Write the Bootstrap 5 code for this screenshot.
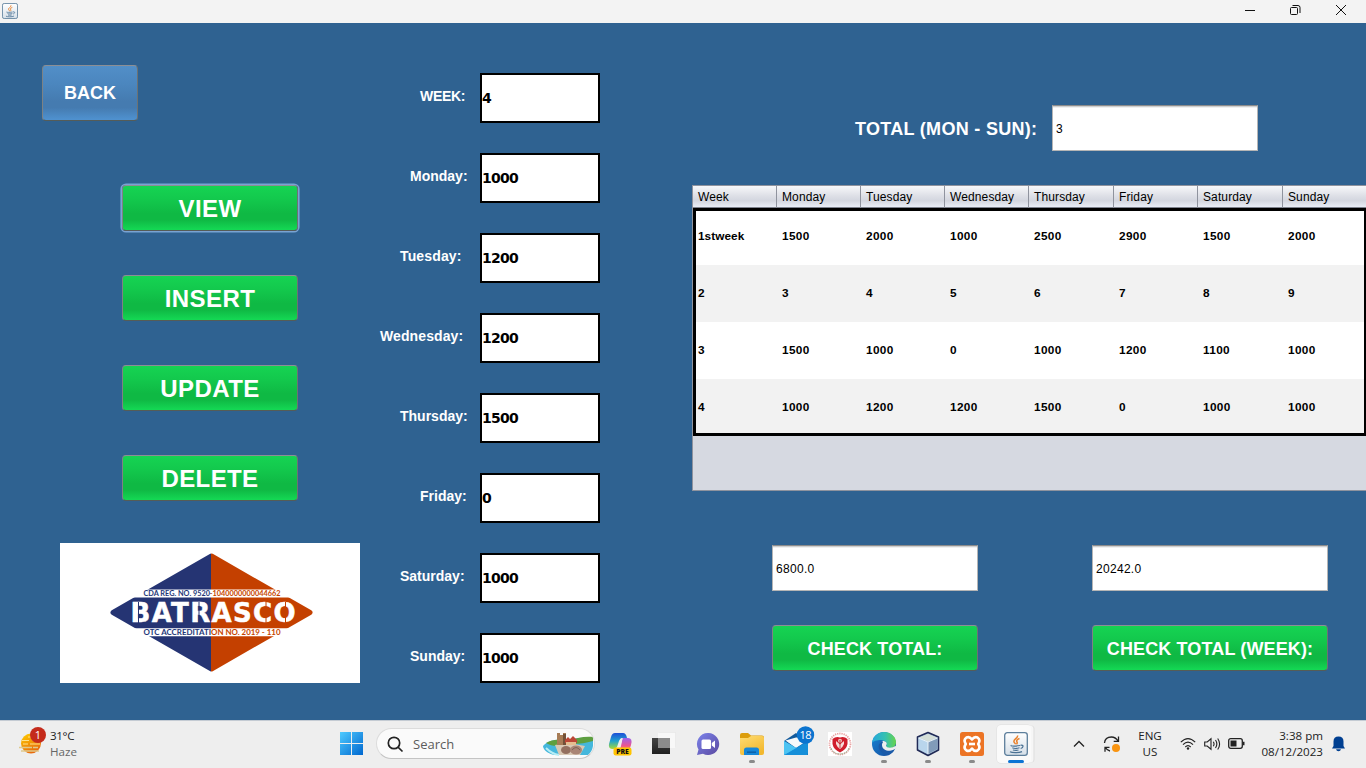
<!DOCTYPE html>
<html lang="en">
<head>
<meta charset="utf-8">
<title>BATRASCO weekly totals</title>
<link href="https://cdn.jsdelivr.net/npm/bootstrap@5.3.0/dist/css/bootstrap.min.css" rel="stylesheet">
<style>
body{width:1366px;height:768px;overflow:hidden;font-family:"Liberation Sans",Arial,sans-serif;background:#2f6291;color:#000}
.titlebar{height:23px;background:#f3f3f3;padding:0 20px 1px 2px}
.desk{height:697px;background:#2f6291}
.side{width:360px;padding-top:42px}
.fields{width:220px;margin-left:20px;padding-top:50px;gap:30px}
.panel{width:674px;margin-left:92px;padding-top:82px}
.btn.sw{border:1px solid;border-color:#8c8f95 #6d7273 #555c58 #7d8284;border-radius:4px;color:#fff;font-weight:700;font-size:18px;letter-spacing:.13px;line-height:1;padding:2px 0 0;height:46px;
 background:linear-gradient(#16d453 0,#13c94d 30%,#0fb944 62%,#0fb944 76%,#15dc56 100%) border-box}
.btn.sw.big{font-size:24px;letter-spacing:.4px;width:176px;padding-top:1px}
.btn.sw.foc{box-shadow:0 0 0 1.6px #79a3d3}
.btn.sw.back{width:96px;height:56px;margin-left:42px;padding:0;letter-spacing:0;background:linear-gradient(#528fc8 0,#4b86be 35%,#457bb0 65%,#457bb0 76%,#5094d3 100%) border-box}
.stackb{margin:64px 0 0 122px;gap:44px}
.brand{margin:42px 0 0 60px;width:300px;height:140px;background:#fff}
.lab{width:100px;color:#fff;font-weight:700;font-size:14px;line-height:16px;padding-bottom:5px;white-space:nowrap}
.i1{padding-left:20px}.i2{padding-left:30px}.i3{padding-left:40px}
.box{width:120px;height:50px;border:2px solid #000;background:#fff;font:700 14px "DejaVu Sans",sans-serif;letter-spacing:-.75px;line-height:46px}
.fld{height:46px;border:1px solid #b5b5b5;border-top-color:#8c8c8c;box-shadow:inset 0 1px 0 #cfcfcf,inset 0 2px 0 #f0f0f0;border-radius:0;padding:0 3px;font-size:12px;letter-spacing:.3px;line-height:46px;background:#fff;color:#000}
.tot{width:197px;padding-top:2px;color:#fff;font-weight:700;font-size:18px;letter-spacing:.3px;white-space:nowrap}
.grid{margin-top:34px;height:306px;border:solid #8f939e;border-width:1px 0 1px 1px;background:#d6d9e1;overflow:hidden}
.grid table{table-layout:fixed;width:674px;border-collapse:separate;border-spacing:0}
.grid .table>thead>tr>th{height:22px;padding:0 0 0 5px;font-weight:400;font-size:12px;letter-spacing:.12px;line-height:20px;border:0;border-right:1px solid #8f939e;border-bottom:1px solid #7e828d;background:linear-gradient(#f7f8fa 0,#dddfe6 48%,#d3d6df 70%,#e9edf6 100%);color:#000}
.grid .table>tbody>tr>td{height:57px;padding:0 0 2px 5px;border:0;font-size:11.8px;font-weight:700;letter-spacing:.35px;vertical-align:middle;line-height:14px;background:#fff;color:#000;box-shadow:none}
.grid .table>tbody>tr>td:first-child{letter-spacing:.05px}
.grid .table>tbody>tr:nth-child(even)>td{background:#f2f2f2}
.frame{position:absolute;left:0;top:22px;width:673px;height:228px;border:3px solid #000;border-right-width:2px}
.taskbar{height:48px;background:#eee;border-top:1px solid #c4cbd3;padding-bottom:2px;font-family:"Open Sans","Noto Sans",sans-serif;font-size:11.6px;line-height:16px;color:#222}
.wx{width:321px;padding-left:18px}
.cell{width:44px;height:47px}
.srch{width:219px;height:31px;border-radius:16px;background:#fafafa;border:1px solid #dcdcdc;border-bottom-color:#c4c4c4;font-size:13px;color:#5c5c5c;padding-left:9px;overflow:hidden}
.run::after{content:"";position:absolute;bottom:4px;left:19px;width:6px;height:3px;border-radius:2px;background:#8a8a8a}
.run.act::after{left:14px;width:16px;background:#0b74d4}
.tile{left:3px;top:5px;width:34px;height:38px;background:#fafafa;border-radius:4px;box-shadow:3px 0 0 -.5px #f6f6f6,4px 0 0 -.5px #ddd,0 0 0 .5px #ddd}
</style>
</head>
<body>
<svg width="0" height="0" class="position-absolute">
 <defs>
  <symbol id="java" viewBox="0 0 24 24">
   <linearGradient id="jb" x2="0" y2="1"><stop stop-color="#fff"/><stop offset="1" stop-color="#d5dfe8"/></linearGradient>
   <rect x=".7" y=".7" width="22.6" height="22.6" rx="2.6" fill="url(#jb)" stroke="#5d7f9c" stroke-width="1.3"/>
   <path d="M13.500 3.500c1 2.500-5 4-3.400 6.600.4.800 1.200 1.400 1.500 2.200M15.500 6.500c-2 .8-3.500 2-2.600 3.300.7 1 .3 1.700-.4 2.500" fill="none" stroke="#e9812b" stroke-width="1.500"/>
   <path d="M7.500 13.200c-1.800.8 2 1.300 8.500.3M8.300 15.800c1.500.7 5 .7 7.200 0M9 18c1.500.5 4 .5 5.500 0M6 19.800c2 1.200 9 1.200 12-.2M16.500 13.300c3.500-.8 3.200 2.300.2 3.200" fill="none" stroke="#4b7294" stroke-width="1.200"/>
  </symbol>
 </defs>
</svg>

<header class="titlebar d-flex align-items-center justify-content-between">
 <svg width="16" height="16"><use href="#java"/></svg>
 <div class="d-flex align-items-center">
  <svg width="101" height="12" viewBox="0 0 101 12" fill="none" stroke="#111" stroke-width="1" style="margin-top:-2px">
   <path d="M0 6.500h10"/>
   <rect x="45.500" y="3.500" width="7" height="7" rx="1"/><path d="M47.500 1.500h5.500a2 2 0 0 1 2 2v5.500"/>
   <path d="M91 1l10 10M101 1L91 11"/>
  </svg>
 </div>
</header>

<main class="desk d-flex align-items-start">
 <section class="side">
  <button class="btn sw back d-block">BACK</button>
  <div class="stackb d-flex flex-column">
   <button class="btn sw big foc">VIEW</button>
   <button class="btn sw big">INSERT</button>
   <button class="btn sw big">UPDATE</button>
   <button class="btn sw big">DELETE</button>
  </div>
  <svg class="brand d-block" viewBox="0 0 300 140">
   <linearGradient id="half" gradientUnits="userSpaceOnUse" x1="0" x2="300" y1="0" y2="0"><stop offset=".505" stop-color="#253473"/><stop offset=".505" stop-color="#c44000"/></linearGradient>
   <path d="M151.500 13L250 69.500 151.500 126 53 69.500z" fill="url(#half)" stroke="url(#half)" stroke-width="5" stroke-linejoin="round"/>
   <path d="M60 46.500h185v8H60zM60 85.300h185v8H60z" fill="#fff"/>
   <g fill="url(#half)" font-family="Lato,sans-serif" font-weight="700" font-size="7">
    <text x="83.500" y="53.200" textLength="137" lengthAdjust="spacingAndGlyphs">CDA REG. NO. 9520-1040000000044662</text>
    <text x="83.500" y="91.700" textLength="137" lengthAdjust="spacingAndGlyphs">OTC ACCREDITATION NO. 2019 - 110</text>
   </g>
   <text x="70.500" y="79.200" textLength="165" lengthAdjust="spacing" fill="#fff" stroke="#fff" stroke-width=".5" font-family="'DejaVu Sans',sans-serif" font-weight="700" font-size="26">BATRASCO</text>
   <path d="M78.500 59v22" stroke="#253473" stroke-width="1"/>
   <path d="M139 59v22" stroke="#253473" stroke-width="1"/>
   <path d="M206 59v6M206 74v7M225.500 59v6M225.500 74v7" stroke="#c44000" stroke-width="1"/>
  </svg>
 </section>

 <section class="fields d-flex flex-column">
  <div class="d-flex align-items-center"><div class="lab i3" style="letter-spacing:-.3px">WEEK:</div><div class="box">4</div></div>
  <div class="d-flex align-items-center"><div class="lab i2">Monday:</div><div class="box">1000</div></div>
  <div class="d-flex align-items-center"><div class="lab i1" style="letter-spacing:.15px">Tuesday:</div><div class="box">1200</div></div>
  <div class="d-flex align-items-center"><div class="lab" style="letter-spacing:.1px">Wednesday:</div><div class="box">1200</div></div>
  <div class="d-flex align-items-center"><div class="lab i1">Thursday:</div><div class="box">1500</div></div>
  <div class="d-flex align-items-center"><div class="lab i3">Friday:</div><div class="box">0</div></div>
  <div class="d-flex align-items-center"><div class="lab i1">Saturday:</div><div class="box">1000</div></div>
  <div class="d-flex align-items-center"><div class="lab i2">Sunday:</div><div class="box">1000</div></div>
 </section>

 <section class="panel">
  <div class="d-flex align-items-center justify-content-end" style="padding-right:108px">
   <div class="tot">TOTAL (MON - SUN):</div><div class="fld" style="width:206px">3</div>
  </div>
  <div class="grid position-relative">
   <table class="table mb-0">
    <colgroup><col style="width:84px"><col style="width:84px"><col style="width:84px"><col style="width:84px"><col style="width:85px"><col style="width:84px"><col style="width:85px"><col style="width:84px"></colgroup>
    <thead><tr><th>Week</th><th>Monday</th><th>Tuesday</th><th>Wednesday</th><th>Thursday</th><th>Friday</th><th>Saturday</th><th>Sunday</th></tr></thead>
    <tbody>
     <tr><td>1stweek</td><td>1500</td><td>2000</td><td>1000</td><td>2500</td><td>2900</td><td>1500</td><td>2000</td></tr>
     <tr><td>2</td><td>3</td><td>4</td><td>5</td><td>6</td><td>7</td><td>8</td><td>9</td></tr>
     <tr><td>3</td><td>1500</td><td>1000</td><td>0</td><td>1000</td><td>1200</td><td>1100</td><td>1000</td></tr>
     <tr><td>4</td><td>1000</td><td>1200</td><td>1200</td><td>1500</td><td>0</td><td>1000</td><td>1000</td></tr>
    </tbody>
   </table>
   <div class="frame"></div>
  </div>
  <div class="d-flex" style="margin:54px 0 0 80px;gap:114px">
   <div class="d-flex flex-column" style="width:206px;gap:34px"><div class="fld">6800.0</div><button class="btn sw">CHECK TOTAL:</button></div>
   <div class="d-flex flex-column" style="width:236px;gap:34px"><div class="fld">20242.0</div><button class="btn sw">CHECK TOTAL (WEEK):</button></div>
  </div>
 </section>
</main>

<footer class="taskbar d-flex align-items-center">
 <div class="wx d-flex align-items-center">
  <svg width="30" height="36" viewBox="0 0 30 36" style="margin-top:-5px">
   <linearGradient id="sun" x2=".5" y2="1"><stop stop-color="#ffd000"/><stop offset="1" stop-color="#e8690b"/></linearGradient>
   <circle cx="13" cy="20.500" r="10" fill="url(#sun)"/>
   <path d="M4 17.500h7M5 21h5M12 21h10M10 14h4M14 17.500h8" stroke="#ffe28a" stroke-width="1"/>
   <path d="M1 24.500h13M3 28h18M15 24.500h5" stroke="#dfc98d" stroke-width="1.600"/>
   <circle cx="20" cy="12" r="8" fill="#c42b1c"/>
   <text x="20" y="16" text-anchor="middle" font-size="11" fill="#fff">1</text>
  </svg>
  <div style="margin-left:2px"><div style="letter-spacing:-.35px">31°C</div><div style="color:#666">Haze</div></div>
 </div>
 <div class="d-flex align-items-center" style="margin-left:19px">
  <svg width="23" height="23" viewBox="0 0 23 23"><linearGradient id="win" gradientUnits="userSpaceOnUse" x2="23" y2="23"><stop stop-color="#4fcbff"/><stop offset="1" stop-color="#0067cf"/></linearGradient><path d="M0 0h11v11H0zM12 0h11v11H12zM0 12h11v11H0zM12 12h11v11H12z" fill="url(#win)"/></svg>
  <div class="srch d-flex align-items-center" style="margin-left:13px">
   <svg width="18" height="18" viewBox="0 0 18 18" fill="none" stroke="#222" stroke-width="1.700"><circle cx="8" cy="8" r="5.700"/><path d="M12 12.200l4.500 4.300"/></svg>
   <span style="margin-left:9px">Search</span>
   <svg class="ms-auto" width="52" height="27" viewBox="0 0 52 27">
    <path d="M1 16C7 9 19 9 28 10c8-3 18-3 23-2v8q-1 6-5 9H13C5 24 1 19 1 16z" fill="#45b7dc"/>
    <path d="M4 13c8-5 15-3 21-2 9-3 18-5 26-4v4c-7 2-13 3-20 3C20 15 12 18 4 13z" fill="#5e9f40"/>
    <path d="M13 15q13-3 30 1l-5 9H17z" fill="#d9c9b5"/>
    <path d="M4 18q6 6 13 7" fill="none" stroke="#b7edf5" stroke-width="2"/>
    <path d="M15 3h3v2h3V3h3v12h-9z" fill="#a77c56"/><path d="M21 4h3v11h-3z" fill="#725139"/>
    <path d="M23 10l3-3 2 2 3-3 4 4v3H23z" fill="#bc4636"/><path d="M24 12h10v3H24z" fill="#e5bd90"/>
    <ellipse cx="24" cy="20" rx="5" ry="4" fill="#94705f"/><ellipse cx="34" cy="20" rx="6" ry="4.500" fill="#a98575"/><path d="M30 20q4-5 8 0" stroke="#7e6357" fill="none"/>
   </svg>
  </div>
  <div class="d-flex" style="margin-left:3px">
   <div class="cell d-flex align-items-center justify-content-center">
    <svg width="26" height="26" viewBox="0 0 26 26">
     <linearGradient id="cpa" x2="0" y2="1"><stop stop-color="#1d4fd7"/><stop offset=".5" stop-color="#20a2cf"/><stop offset="1" stop-color="#a5db35"/></linearGradient>
     <linearGradient id="cpb" x2="0" y2="1"><stop stop-color="#9b62ef"/><stop offset=".6" stop-color="#ed558f"/><stop offset="1" stop-color="#ffae4b"/></linearGradient>
     <path d="M8 2h8q3 0 4 5h-5q-2 0-3 3l-2 6q-1 2-4 2-5 0-4-5l2-7q1-4 4-4z" fill="url(#cpa)"/>
     <path d="M16 7h5q5 0 3 7l-2 6H10q3-1 4-5l1-5q0-3 1-3z" fill="url(#cpb)"/>
     <path d="M15 7.500l-3.500 10" stroke="#eee" stroke-width="1.500"/>
     <rect x="6.500" y="16.500" width="18" height="8" rx="2.200" fill="#ffc400"/><text x="15.500" y="23.200" text-anchor="middle" font-size="6.800" font-weight="800" fill="#111">PRE</text>
    </svg>
   </div>
   <div class="cell d-flex align-items-center justify-content-center">
    <svg width="24" height="23" viewBox="0 0 24 23"><linearGradient id="tv" x2="0" y2="1"><stop stop-color="#444"/><stop offset="1" stop-color="#202020"/></linearGradient><path d="M0 6h18v16H0z" fill="url(#tv)"/><path d="M6 0h18v16H6z" fill="#f8f8f8"/><path d="M6 6h12v10H6z" fill="#8c8c8c"/><path d="M6.300.3h17.400v15.400" fill="none" stroke="#ddd" stroke-width=".6"/></svg>
   </div>
   <div class="cell d-flex align-items-center justify-content-center">
    <svg width="24" height="24" viewBox="0 0 24 24"><linearGradient id="ch" x2="1" y2="1"><stop stop-color="#7b83eb"/><stop offset="1" stop-color="#5b49a0"/></linearGradient><path d="M12.500 1A11 11 0 1 1 7 21.700L1 23l1.500-5.500A11 11 0 0 1 12.500 1z" fill="url(#ch)"/><rect x="5.500" y="7.500" width="9.500" height="9.500" rx="1.500" fill="#fff"/><path d="M15.800 11l3.200-2.500v7.500L15.800 13.500z" fill="#fff"/></svg>
   </div>
   <div class="cell run position-relative d-flex align-items-center justify-content-center">
    <svg width="24" height="22" viewBox="0 0 24 22"><linearGradient id="fo" x2=".6" y2="1"><stop stop-color="#ffdc72"/><stop offset="1" stop-color="#f2b82f"/></linearGradient><path d="M0 2q0-2 2-2h6l3 2.500h11q2 0 2 2V10H0z" fill="#dc9d0c"/><path d="M0 5h8l3-2h11q2 0 2 2v15q0 2-2 2H2q-2 0-2-2z" fill="url(#fo)"/><path d="M4 22v-5q0-2.500 2.500-2.500h10q2.500 0 2.500 2.500v5z" fill="#1687d8"/><path d="M7 18.500h9v1.300H7z" fill="#0b5ba2"/></svg>
   </div>
   <div class="cell position-relative d-flex align-items-center justify-content-center">
    <svg width="34" height="34" viewBox="0 0 34 34" style="margin-left:6px;margin-top:-2px">
     <path d="M2 15L14 7l12 8v14H2z" fill="#125a9c"/><path d="M3.500 14.500l10.500-3h9l2.500 3-11.500 7.500z" fill="#f7f9fa"/><path d="M2 15l24 14H4q-2 0-2-2z" fill="#36b4ee"/><path d="M26 15L2 29h22q2 0 2-2z" fill="#168fd9"/><path d="M2 15l12 7-12 7z" fill="#4cc3f2"/>
     <circle cx="23.500" cy="9" r="8.700" fill="#0b74cf"/><text x="23.300" y="13" text-anchor="middle" font-size="11" letter-spacing="-.5" fill="#fff">18</text>
    </svg>
   </div>
   <div class="cell d-flex align-items-center justify-content-center">
    <svg width="24" height="24" viewBox="0 0 24 24"><path d="M0 0h24v24H0z" fill="#fff"/><circle cx="12" cy="12" r="10.500" fill="none" stroke="#e9a3a3" stroke-width="1.800" stroke-dasharray="1.300 .9"/><path d="M3 16q2 6 9 6t9-6" fill="none" stroke="#8fb591" stroke-width="1" stroke-dasharray="2 1"/><path d="M4.500 7q3.500-3 7.500-1.500Q16 4 19.500 7v5q-1 5.500-7.500 8.500-6.500-3-7.500-8.500z" fill="#d01f2d"/><path d="M8 9l4 3.500L16 9v3q-1 3-4 5-3-2-4-5z" fill="#f5dcd9"/><circle cx="12" cy="8.800" r="2" fill="#f0c5c0"/><path d="M12 8v8" stroke="#b33" stroke-width=".9"/></svg>
   </div>
   <div class="cell run position-relative d-flex align-items-center justify-content-center">
    <svg width="24" height="24" viewBox="0 0 24 24">
     <linearGradient id="ea" x2="1"><stop stop-color="#25a7dd"/><stop offset=".55" stop-color="#35c1b1"/><stop offset="1" stop-color="#67d44b"/></linearGradient><linearGradient id="eb" x2="1" y2="1"><stop stop-color="#1684d6"/><stop offset="1" stop-color="#164b9b"/></linearGradient>
     <circle cx="12" cy="12" r="12" fill="url(#eb)"/>
     <path d="M0 11C1 4 6 0 12 0c7 0 12 5 12 10 0 4-3 6-6 6-4 0-5-1-4-2 2-2 0-6-5-6-4 0-8 1-9 3z" fill="url(#ea)"/>
     <path d="M11 8.800c-6 3-4 10 5 10.500 3 0 6-1.500 8.500-3.500l-1-2c-3 2.800-9.500 2.500-9.500-.3 2-2 0-4.300-3-4.700z" fill="#eee"/><path d="M10 9c-6 3-4 13 6 14 3-1 5-3 6.500-5.500C17 20.500 10 18 10 13c0-1.500.7-2 1-3z" fill="#1a5aa8"/>
    </svg>
   </div>
   <div class="cell run position-relative d-flex align-items-center justify-content-center">
    <svg width="24" height="26" viewBox="0 0 24 26"><g stroke="#202a56" stroke-width="1.600" stroke-linejoin="round"><path d="M12 1.500L22.500 6v13L12 24.500 1.500 19V6z" fill="#b0c7dd"/></g><path d="M2.500 7L12 11v12L2.500 18z" fill="#b9d5ec"/><path d="M12 11l9.500-4v11L12 23z" fill="#819bb9"/><path d="M3 6.500L12 3l9 3.500L12 10.500z" fill="#d5dfd8"/><path d="M2.500 7L12 11l9.500-4M12 11v12" fill="none" stroke="#eff5fa" stroke-width=".9"/></svg>
   </div>
   <div class="cell run position-relative d-flex align-items-center justify-content-center">
    <svg width="24" height="24" viewBox="0 0 24 24"><rect width="24" height="24" rx="2.500" fill="#ec7425"/><path d="M6.500 5.500q3-1.500 5.500 2 2.500-3.500 5.500-2 3.500 2.500.7 6.500 2.800 4-.7 6.500-3 1.500-5.500-2-2.500 3.500-5.500 2-3.500-2.500-.7-6.500-2.800-4 .7-6.500z" fill="none" stroke="#fff" stroke-width="2.600" stroke-linejoin="round"/><path d="M9 12h6" stroke="#fff" stroke-width="2.600"/></svg>
   </div>
   <div class="cell run act position-relative d-flex align-items-center justify-content-center">
    <div class="tile position-absolute"></div><svg class="position-relative" width="24" height="24"><use href="#java"/></svg>
   </div>
  </div>
 </div>
 <div class="d-flex align-items-center ms-auto" style="padding-right:20px">
  <svg width="12" height="8" viewBox="0 0 12 8" fill="none" stroke="#222" stroke-width="1.300"><path d="M1 6.500L6 1.500l5 5"/></svg>
  <svg width="18" height="18" viewBox="0 0 18 18" style="margin-left:18px" fill="none" stroke="#222" stroke-width="1.300"><path d="M1.500 8Q2 2 8.500 2q4 0 6.500 4M15.500 1.500v4.800h-4.800M6.500 12.300H2v4.500M2.500 12.500Q4 15.500 7 16"/><circle cx="13" cy="13" r="4" fill="#f99410" stroke="none"/></svg>
  <div class="text-center" style="width:26px;margin-left:16px">ENG<br>US</div>
  <svg width="16" height="14" viewBox="0 0 16 14" style="margin-left:17px" fill="none" stroke="#222" stroke-width="1.200"><path d="M.8 5.200q7.200-7.200 14.400 0M3 7.700q5-5 10 0M5.300 10q2.700-2.700 5.400 0"/><circle cx="8" cy="11.500" r="1.200" fill="#222" stroke="none"/></svg>
  <svg width="17" height="14" viewBox="0 0 17 14" style="margin-left:8px" fill="none" stroke="#222" stroke-width="1.100"><path d="M.7 5h2.500L7 1.800v10.400L3.200 9H.7zM9.300 4.700q1.500 2.300 0 4.600M11.500 3q2.700 4 0 8M13.700 1.500q3.800 5.500 0 11"/></svg>
  <svg width="17" height="11" viewBox="0 0 17 11" style="margin-left:7px"><rect x=".7" y=".7" width="13.600" height="9.600" rx="2" fill="none" stroke="#222" stroke-width="1.300"/><path d="M2.500 2.500h6v6h-6zM15 3.700h1.500v3.600H15z" fill="#222"/></svg>
  <div class="text-end" style="width:64px;margin-left:14px;font-size:11.600px;white-space:nowrap">3:38 pm<br>08/12/2023</div>
  <svg width="15" height="16" viewBox="0 0 15 16" style="margin-left:8px" fill="#003f91"><path d="M7.500.5q5 0 5 5V10l1.500 2.500H1L2.500 10V5.500q0-5 5-5zM5 13.300h5q-.5 2-2.500 2t-2.500-2z"/></svg>
 </div>
</footer>
<script src="https://cdn.jsdelivr.net/npm/bootstrap@5.3.0/dist/js/bootstrap.bundle.min.js"></script>
</body>
</html>
